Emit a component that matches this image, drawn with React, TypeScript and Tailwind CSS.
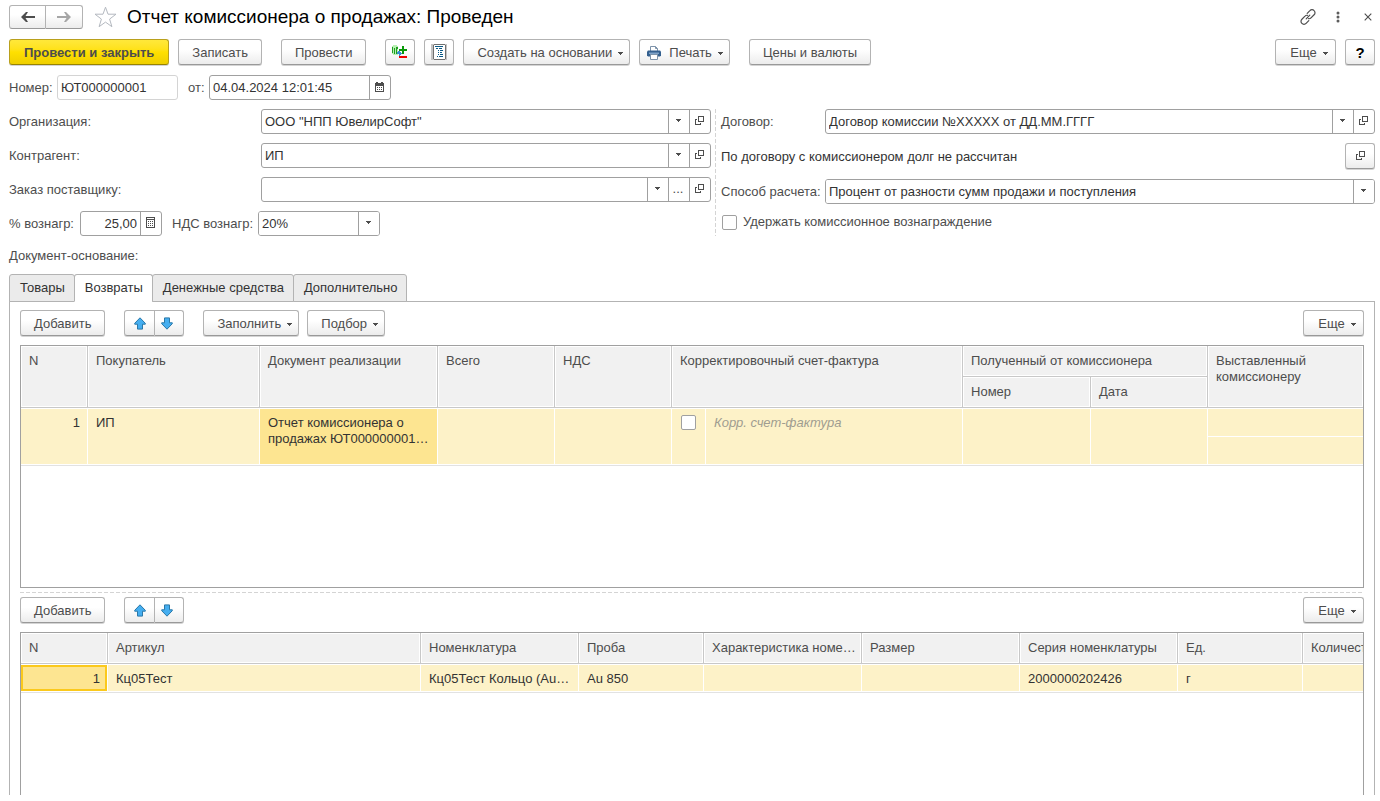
import React from "react";
import type { ReactNode } from "react";

const BTN =
  "flex h-[26px] shrink-0 items-center justify-center rounded-[3px] border border-[#b3b3b3] border-b-[#999999] bg-linear-to-b from-white from-40% to-[#ececec] pt-0.5 text-[#4d4d4d] shadow-[0_1px_0_#d4d4d4]";
const ICON_BTN =
  "flex h-[26px] shrink-0 items-center justify-center rounded-[3px] border border-[#b3b3b3] border-b-[#999999] bg-linear-to-b from-white from-40% to-[#ececec] text-[#4d4d4d] shadow-[0_1px_0_#d4d4d4]";
const FIELD =
  "flex h-[25px] min-w-0 items-stretch overflow-hidden rounded-[3px] border border-[#a0a0a0] bg-white";
const CHECK =
  "ml-px block size-[15px] appearance-none rounded-xs border border-[#a0a0a0] bg-white";
const TH =
  "border-r border-b border-[#c8c8c8] bg-[#f1f1f1] px-2 pt-[7px] text-left align-top font-normal leading-4 text-[#4d4d4d] shadow-[inset_0_0_0_1px_#fff]";
const TD =
  "border-b border-[#e2e2e2] bg-[#fdf2c8] px-2 pt-[7px] align-top leading-4 text-[#333333] shadow-[inset_-1px_-1px_0_#fff,inset_0_1px_0_#fff]";

function Caret() {
  return (
    <svg width="5" height="3" viewBox="0 0 5 3" shapeRendering="crispEdges" className="shrink-0" aria-hidden="true">
      <path d="M0 0h5v1h-1v1h-1v1h-1v-1h-1v-1h-1z" fill="#4d4d4d" />
    </svg>
  );
}

function OpenIcon() {
  return (
    <svg width="9" height="9" viewBox="0 0 9 9" shapeRendering="crispEdges" fill="none" stroke="#4d4d4d" aria-hidden="true">
      <path d="M3.5 .5h5v5h-5z" />
      <path d="M2 3.5h-1.5v5h5v-1.5" />
    </svg>
  );
}

function ArrowIcon({ down = false }: { down?: boolean }) {
  return (
    <svg width="12" height="13" viewBox="0 0 12 13" className={down ? "rotate-180" : ""} aria-hidden="true">
      <path d="M6 .8 11.300 6.300v.9H8.500v4.900h-5V7.200H.7v-.9z" fill="#45aef0" stroke="#2a78a8" />
    </svg>
  );
}

function CalendarIcon() {
  return (
    <svg width="9" height="10" viewBox="0 0 9 10" shapeRendering="crispEdges" fill="#4d4d4d" aria-hidden="true">
      <path d="M0 1h1v-1h2v1h3v-1h2v1h1v9h-9zM1 4v5h7v-5z" fillRule="evenodd" />
      <path d="M2 5h1v1h-1zM4 5h1v1h-1zM6 5h1v1h-1zM2 7h1v1h-1zM4 7h1v1h-1zM6 7h1v1h-1z" />
    </svg>
  );
}

function CalculatorIcon() {
  return (
    <svg width="9" height="11" viewBox="0 0 9 11" shapeRendering="crispEdges" fill="#4d4d4d" aria-hidden="true">
      <path d="M0 0h9v11h-9zM1 1v1h7v-1zM1 3v7h7v-7z" fillRule="evenodd" />
      <path d="M2 4h1v1h-1zM4 4h1v1h-1zM6 4h1v1h-1zM2 6h1v1h-1zM4 6h1v1h-1zM6 6h1v1h-1zM2 8h1v1h-1zM4 8h1v1h-1zM6 8h1v1h-1z" />
    </svg>
  );
}

function MovementsIcon() {
  return (
    <svg width="16" height="16" viewBox="0 0 16 16" shapeRendering="crispEdges" aria-hidden="true">
      <path d="M1 1h4v1h1v9h-5v-1h-1v-8h1z" fill="#b9f0b4" />
      <path d="M0 3h1v6h-1zM2 4h1v6h-1zM4 3h2v2h-1v5h-1z" fill="#1f9f1f" />
      <path d="M10 2h2v3h3v2h-3v3h-2v-3h-3v-2h3z" fill="#0a9a0a" />
      <path d="M6 7h2v1h1v1h1v1h-1v1h-1v1h-1v-2h-2v-2h1z" fill="#3a8fd0" />
      <path d="M7 12h8v2h-8z" fill="#f00000" />
    </svg>
  );
}

function JournalIcon() {
  return (
    <svg width="16" height="16" viewBox="0 0 16 16" shapeRendering="crispEdges" aria-hidden="true">
      <path d="M0 0h16v16h-16z" fill="#c4c4c4" />
      <path d="M3 0h11v1h1v14h-1v1h-11v-1h-1v-14h1z" fill="#707070" />
      <path d="M3 1h11v14h-11z" fill="#ffffff" />
      <path d="M4 2h8v1h-8zM5 4h2v1h-2zM8 4h3v1h-3zM7 6h1v1h-1zM9 6h3v1h-3zM7 8h1v1h-1zM9 8h2v1h-2zM7 10h1v1h-1zM9 10h3v1h-3zM6 12h1v1h-1zM8 12h4v1h-4z" fill="#0b5a86" />
    </svg>
  );
}

function PrinterIcon() {
  return (
    <svg width="14" height="14" viewBox="0 0 14 14" aria-hidden="true">
      <path d="M3.5 5.5V.5h5l2 2v3" fill="#fff" stroke="#7d93aa" />
      <path d="M8.5 .5v2h2" fill="none" stroke="#7d93aa" />
      <path d="M1 4.5h12l1 1v4l-1 1h-12l-1-1v-4z" fill="#34608f" />
      <path d="M2 6.5h10v1.500h-10z" fill="#7fa3c8" />
      <path d="M3.5 8.5h7v5h-7z" fill="#fff" stroke="#7d93aa" />
    </svg>
  );
}

function FieldButton({ label, children }: { label: string; children: ReactNode }) {
  return (
    <button
      type="button"
      aria-label={label}
      className="flex w-[21px] shrink-0 items-center justify-center border-l border-[#a0a0a0] pr-0.5 pb-0.5 text-[#4d4d4d]"
    >
      {children}
    </button>
  );
}

function Lookup({ id, value, more = false }: { id: string; value: string; more?: boolean }) {
  return (
    <div className={FIELD + " flex-1"}>
      <input id={id} defaultValue={value} className="min-w-0 flex-1 px-[3px] text-[#333333] outline-none" />
      <FieldButton label="Выбрать из списка"><Caret /></FieldButton>
      {more && <FieldButton label="Показать все">...</FieldButton>}
      <FieldButton label="Открыть"><OpenIcon /></FieldButton>
    </div>
  );
}

function DropField({ id, value, width }: { id: string; value: string; width: string }) {
  return (
    <div className={FIELD + " relative " + width}>
      <select id={id} className="w-full appearance-none bg-white px-[3px] text-[#333333] outline-none">
        <option>{value}</option>
      </select>
      <span className="pointer-events-none absolute inset-y-0 right-0 flex w-[21px] items-center justify-center border-l border-[#a0a0a0] pr-0.5 pb-0.5">
        <Caret />
      </span>
    </div>
  );
}

function MenuButton({ children }: { children: ReactNode }) {
  return (
    <button type="button" className={BTN + " min-w-[61px] gap-1.5 pr-1.5 pl-[13px]"}>
      {children}
      <Caret />
    </button>
  );
}

function TextButton({ children }: { children: ReactNode }) {
  return <button type="button" className={BTN + " px-[13px]"}>{children}</button>;
}

function MoveButtons() {
  return (
    <div className="flex">
      <button type="button" aria-label="Переместить вверх" className={ICON_BTN + " w-[31px] rounded-r-none"}>
        <ArrowIcon />
      </button>
      <button type="button" aria-label="Переместить вниз" className={ICON_BTN + " w-[29px] rounded-l-none border-l-0 pr-1"}>
        <ArrowIcon down />
      </button>
    </div>
  );
}

const LABEL = "shrink-0 text-[#4d4d4d]";

const goodsColumns = [
  { title: "N", width: "w-[87px]", value: "1" },
  { title: "Артикул", width: "w-[313px]", value: "Кц05Тест" },
  { title: "Номенклатура", width: "w-[158px]", value: "Кц05Тест Кольцо (Au…" },
  { title: "Проба", width: "w-[125px]", value: "Au 850" },
  { title: "Характеристика номе…", width: "w-[158px]", value: "" },
  { title: "Размер", width: "w-[158px]", value: "" },
  { title: "Серия номенклатуры", width: "w-[158px]", value: "2000000202426" },
  { title: "Ед.", width: "w-[125px]", value: "г" },
  { title: "Количество", width: "", value: "" },
];

const tabs = ["Товары", "Возвраты", "Денежные средства", "Дополнительно"];

export default function App() {
  return (
    <div className="flex min-h-screen flex-col bg-white pt-[5px] pr-[5px] pb-1.5 pl-[9px] font-['Liberation_Sans',Arial,sans-serif] text-[13px] leading-4">
      <header className="flex items-center">
        <div className="flex">
          <button type="button" aria-label="Назад" className="flex h-6 w-[37px] items-center justify-center rounded-l-[3px] border border-[#b3b3b3] border-b-[#999999] bg-linear-to-b from-white from-40% to-[#ececec]">
            <svg width="14" height="10" viewBox="0 0 14 10" aria-hidden="true">
              <path d="M0 5 5 0h2L4.500 4H14v2H4.500L7 10H5z" fill="#4d4d4d" />
            </svg>
          </button>
          <button type="button" aria-label="Вперед" className="flex h-6 w-[37px] items-center justify-center rounded-r-[3px] border border-l-0 border-[#b3b3b3] border-b-[#999999] bg-linear-to-b from-white from-40% to-[#ececec]">
            <svg width="14" height="10" viewBox="0 0 14 10" aria-hidden="true">
              <path d="M14 5 9 0H7l2.500 4H0v2h9.500L7 10h2z" fill="#a6a6a6" />
            </svg>
          </button>
        </div>
        <button type="button" aria-label="Добавить в избранное" className="ml-[11px]">
          <svg width="23" height="22" viewBox="0 0 23 22" fill="none" stroke="#b4b9c0" aria-hidden="true">
            <path d="M11.5 1.2 14 8.2h8l-6.400 4.900 2.300 7.600-6.400-4.600-6.400 4.600 2.300-7.600L1 8.200h8z" />
          </svg>
        </button>
        <h1 className="ml-2.5 text-[19px] leading-6 text-black">Отчет комиссионера о продажах: Проведен</h1>
        <div className="ml-auto flex items-center pr-[3px]">
          <button type="button" aria-label="Получить ссылку">
            <svg width="16" height="16" viewBox="0 0 16 16" fill="none" stroke="#4d4d4d" strokeWidth="1.200" strokeLinecap="round" aria-hidden="true">
              <path d="M7.200 4.300 9.900 1.600a2.900 2.900 0 0 1 4.200 0 2.900 2.900 0 0 1 0 4.200L11 8.900a2.700 2.700 0 0 1-2.500.8" />
              <path d="M8.800 11.700 6.100 14.400a2.900 2.900 0 0 1-4.200 0 2.900 2.900 0 0 1 0-4.200L5 7.100a2.700 2.700 0 0 1 2.500-.8" />
              <path d="M6.200 9.800 9.800 6.200" />
            </svg>
          </button>
          <button type="button" aria-label="Дополнительные действия" className="ml-5">
            <svg width="4" height="12" viewBox="0 0 4 12" fill="#5c5c5c" aria-hidden="true">
              <circle cx="2" cy="2" r="1.500" />
              <circle cx="2" cy="6" r="1.500" />
              <circle cx="2" cy="10" r="1.500" />
            </svg>
          </button>
          <button type="button" aria-label="Закрыть" className="ml-6">
            <svg width="8" height="8" viewBox="0 0 8 8" stroke="#4d4d4d" strokeWidth="1.100" aria-hidden="true">
              <path d="M.7 .7l6.600 6.600M7.300 .7.700 7.300" />
            </svg>
          </button>
        </div>
      </header>

      <div className="mt-2.5 flex items-center">
        <button type="button" className="h-[26px] rounded-[3px] border border-[#b9a01c] border-b-[#998400] bg-linear-to-b from-[#ffe83a] via-[#ffe000] to-[#efcf00] px-3.5 pt-0.5 font-bold text-[#4d4d4d] shadow-[0_1px_0_#d4d4d4]">
          Провести и закрыть
        </button>
        <div className="ml-[9px] flex gap-[19px]">
          <TextButton>Записать</TextButton>
          <TextButton>Провести</TextButton>
          <div className="flex gap-[9px]">
            <button type="button" aria-label="Движения документа" className={ICON_BTN + " w-[30px]"}><MovementsIcon /></button>
            <button type="button" aria-label="Журнал" className={ICON_BTN + " w-[30px]"}><JournalIcon /></button>
            <MenuButton>Создать на основании</MenuButton>
            <button type="button" className={BTN + " gap-1.5 pr-1.5 pl-[7px]"}>
              <PrinterIcon />
              <span className="pl-0.5">Печать</span>
              <Caret />
            </button>
          </div>
          <TextButton>Цены и валюты</TextButton>
        </div>
        <div className="ml-auto flex gap-[9px]">
          <MenuButton>Еще</MenuButton>
          <button type="button" aria-label="Справка" className={BTN + " w-[30px]"}>
            <span className="text-[15px] font-bold text-black">?</span>
          </button>
        </div>
      </div>

      <div className="mt-2.5 flex items-center">
        <label htmlFor="number" className={LABEL + " w-12"}>Номер:</label>
        <input id="number" readOnly defaultValue="ЮТ000000001" className="h-[25px] w-[121px] rounded-[3px] border border-[#d4d4d4] px-[3px] text-[#333333] outline-none" />
        <label htmlFor="date" className={LABEL + " ml-2.5 w-[21px]"}>от:</label>
        <div className={FIELD + " w-[182px]"}>
          <input id="date" defaultValue="04.04.2024 12:01:45" className="min-w-0 flex-1 px-[3px] text-[#333333] outline-none" />
          <FieldButton label="Календарь"><CalendarIcon /></FieldButton>
        </div>
      </div>

      <div className="mt-[9px] grid grid-cols-[702fr_660fr] gap-1">
        <div className="flex flex-col gap-[9px]">
          <div className="flex items-center">
            <label htmlFor="org" className={LABEL + " w-[252px]"}>Организация:</label>
            <Lookup id="org" value={'ООО "НПП ЮвелирСофт"'} />
          </div>
          <div className="flex items-center">
            <label htmlFor="partner" className={LABEL + " w-[252px]"}>Контрагент:</label>
            <Lookup id="partner" value="ИП" />
          </div>
          <div className="flex items-center">
            <label htmlFor="order" className={LABEL + " w-[252px]"}>Заказ поставщику:</label>
            <Lookup id="order" value="" more />
          </div>
          <div className="flex items-center">
            <label htmlFor="fee" className={LABEL + " w-[71px]"}>% вознагр:</label>
            <div className={FIELD + " w-[82px]"}>
              <input id="fee" defaultValue="25,00" className="min-w-0 flex-1 px-[3px] text-right text-[#333333] outline-none" />
              <FieldButton label="Калькулятор"><CalculatorIcon /></FieldButton>
            </div>
            <label htmlFor="vat" className={LABEL + " ml-2.5 w-[86px]"}>НДС вознагр:</label>
            <DropField id="vat" value="20%" width="w-[122px]" />
          </div>
        </div>
        <div className="flex gap-[5px]">
          <div className="w-px shrink-0 bg-[repeating-linear-gradient(180deg,#d4d4d4_0_4px,transparent_4px_6px)]" />
          <div className="min-w-0 flex-1">
            <div className="flex items-center">
              <label htmlFor="contract" className={LABEL + " w-[104px]"}>Договор:</label>
              <Lookup id="contract" value="Договор комиссии №XXXXX от ДД.ММ.ГГГГ" />
            </div>
            <div className="mt-[9px] flex items-center justify-between text-[#333333]">
              <p className="pt-0.5">По договору с комиссионером долг не рассчитан</p>
              <button type="button" aria-label="Открыть расчеты" className={ICON_BTN + " w-[30px] pb-0.5"}><OpenIcon /></button>
            </div>
            <div className="mt-2.5 flex items-center">
              <label htmlFor="method" className={LABEL + " w-[104px]"}>Способ расчета:</label>
              <DropField id="method" value="Процент от разности сумм продажи и поступления" width="flex-1" />
            </div>
            <label className="mt-2.5 flex items-center gap-1.5 text-[#4d4d4d]">
              <input type="checkbox" className={CHECK} />
              Удержать комиссионное вознаграждение
            </label>
          </div>
        </div>
      </div>

      <p className="mt-3 text-[#4d4d4d]">Документ-основание:</p>

      <div role="tablist" className="relative z-10 mt-2.5 -mb-px flex">
        {tabs.map((t) => (
          <button
            key={t}
            type="button"
            role="tab"
            aria-selected={t === "Возвраты"}
            className={
              "-mr-px h-7 rounded-t-[3px] border border-[#b3b3b3] pr-[9px] pl-2.5 text-[#333333] " +
              (t === "Возвраты" ? "border-b-white bg-white" : "bg-[#ebebeb]")
            }
          >
            {t}
          </button>
        ))}
      </div>

      <main className="flex flex-1 flex-col border border-b-0 border-[#b3b3b3] px-2.5 pt-2">
        <div className="flex gap-[19px]">
          <TextButton>Добавить</TextButton>
          <MoveButtons />
          <div className="flex flex-1 gap-2">
            <MenuButton>Заполнить</MenuButton>
            <MenuButton>Подбор</MenuButton>
          </div>
          <MenuButton>Еще</MenuButton>
        </div>

        <div className="mt-[9px] h-[243px] overflow-hidden border border-[#a0a0a0]">
          <table className="w-full table-fixed border-separate border-spacing-0">
            <colgroup>
              <col className="w-[67px]" />
              <col className="w-[172px]" />
              <col className="w-[178px]" />
              <col className="w-[117px]" />
              <col className="w-[117px]" />
              <col className="w-[34px]" />
              <col className="w-[257px]" />
              <col className="w-[128px]" />
              <col className="w-[117px]" />
              <col />
            </colgroup>
            <thead>
              <tr className="h-[31px]">
                <th rowSpan={2} className={TH}>N</th>
                <th rowSpan={2} className={TH}>Покупатель</th>
                <th rowSpan={2} className={TH}>Документ реализации</th>
                <th rowSpan={2} className={TH}>Всего</th>
                <th rowSpan={2} className={TH}>НДС</th>
                <th rowSpan={2} colSpan={2} className={TH}>Корректировочный счет-фактура</th>
                <th colSpan={2} className={TH}>Полученный от комиссионера</th>
                <th rowSpan={2} className={TH + " border-r-0"}>Выставленный комиссионеру</th>
              </tr>
              <tr className="h-[31px]">
                <th className={TH}>Номер</th>
                <th className={TH}>Дата</th>
              </tr>
            </thead>
            <tbody>
              <tr className="h-[29px]">
                <td rowSpan={2} className={TD + " text-right"}>1</td>
                <td rowSpan={2} className={TD}>ИП</td>
                <td rowSpan={2} className="border-b border-[#e2e2e2] bg-[#fde591] px-2 pt-[7px] align-top leading-4 text-[#333333] shadow-[inset_-1px_-1px_0_#fff,inset_0_1px_0_#fff]">
                  Отчет комиссионера о <span className="whitespace-nowrap">продажах ЮТ000000001…</span>
                </td>
                <td rowSpan={2} className={TD} />
                <td rowSpan={2} className={TD} />
                <td rowSpan={2} className={TD}>
                  <input type="checkbox" aria-label="Корректировочный счет-фактура" className={CHECK} />
                </td>
                <td rowSpan={2} className={TD}>
                  <span className="text-[#a09d90] italic">Корр. счет-фактура</span>
                </td>
                <td rowSpan={2} className={TD} />
                <td rowSpan={2} className={TD} />
                <td className="bg-[#fdf2c8] shadow-[inset_0_-1px_0_#fff,inset_0_1px_0_#fff]" />
              </tr>
              <tr className="h-[29px]">
                <td className="border-b border-[#e2e2e2] bg-[#fdf2c8] shadow-[inset_0_-1px_0_#fff]" />
              </tr>
            </tbody>
          </table>
        </div>

        <div className="mt-1 h-px bg-[repeating-linear-gradient(90deg,#d4d4d4_0_4px,transparent_4px_6px)]" />

        <div className="mt-1 flex gap-[19px]">
          <TextButton>Добавить</TextButton>
          <div className="flex-1"><MoveButtons /></div>
          <MenuButton>Еще</MenuButton>
        </div>

        <div className="mt-[9px] flex-1 overflow-hidden border border-b-0 border-[#a0a0a0]">
          <table className="w-full min-w-[1440px] table-fixed border-separate border-spacing-0">
            <colgroup>
              {goodsColumns.map((c) => <col key={c.title} className={c.width} />)}
            </colgroup>
            <thead>
              <tr className="h-[31px]">
                {goodsColumns.map((c) => <th key={c.title} className={TH + " whitespace-nowrap"}>{c.title}</th>)}
              </tr>
            </thead>
            <tbody>
              <tr className="h-[29px]">
                {goodsColumns.map((c) =>
                  c.title === "N" ? (
                    <td key={c.title} className="border-b border-[#e2e2e2] bg-white p-0 pt-px pr-px pb-px align-top text-[#333333]">
                      <div className="h-[26px] border-2 border-[#fbc91c] bg-[#fde591] pt-1 pr-[5px] text-right leading-4">{c.value}</div>
                    </td>
                  ) : (
                    <td key={c.title} className={TD + " whitespace-nowrap"}>{c.value}</td>
                  ),
                )}
              </tr>
            </tbody>
          </table>
        </div>
      </main>
    </div>
  );
}
